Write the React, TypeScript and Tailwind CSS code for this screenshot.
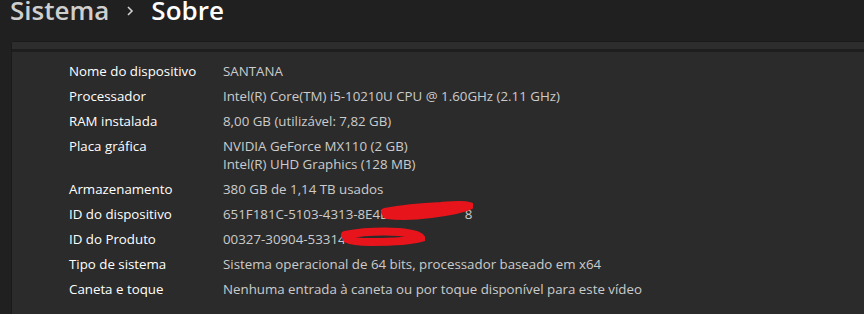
import React from "react";

const rows: { label: string; value: React.ReactNode }[] = [
  { label: "Nome do dispositivo", value: "SANTANA" },
  { label: "Processador", value: "Intel(R) Core(TM) i5-10210U CPU @ 1.60GHz (2.11 GHz)" },
  { label: "RAM instalada", value: "8,00 GB (utilizável: 7,82 GB)" },
  {
    label: "Placa gráfica",
    value: (
      <>
        <div>NVIDIA GeForce MX110 (2 GB)</div>
        <div>Intel(R) UHD Graphics (128 MB)</div>
      </>
    ),
  },
  { label: "Armazenamento", value: "380 GB de 1,14 TB usados" },
  {
    label: "ID do dispositivo",
    value: (
      <span className="relative inline-block">
        651F181C-5103-4313-8E4E-
        <span className="inline-block w-[73px]" />8
        <svg className="absolute left-[158px] top-[-5px]" width="92" height="24" viewBox="0 0 92 24">
          <path
            d="M4 12 C 20 9, 40 7, 60 6 C 72 5, 82 4, 88 6 C 80 10, 66 12, 50 14 C 36 16, 20 17, 6 15"
            stroke="#e8141c"
            strokeWidth="8"
            fill="none"
            strokeLinecap="round"
          />
        </svg>
      </span>
    ),
  },
  {
    label: "ID do Produto",
    value: (
      <span className="relative inline-block">
        00327-30904-53314-
        <svg className="absolute left-[118px] top-[-4px]" width="84" height="22" viewBox="0 0 84 22">
          <path
            d="M4 9 C 20 6, 40 5, 58 6 C 70 7, 78 9, 80 12 C 70 15, 50 16, 30 16 C 18 16, 10 15, 6 13"
            stroke="#e8141c"
            strokeWidth="8"
            fill="none"
            strokeLinecap="round"
          />
        </svg>
      </span>
    ),
  },
  { label: "Tipo de sistema", value: "Sistema operacional de 64 bits, processador baseado em x64" },
  { label: "Caneta e toque", value: "Nenhuma entrada à caneta ou por toque disponível para este vídeo" },
];

export default function App() {
  return (
    <div
      className="w-[864px] h-[314px] overflow-hidden bg-[#202020] flex flex-col"
      style={{ fontFamily: '"Segoe UI", "Open Sans", "Noto Sans", sans-serif' }}
    >
      <div className="h-[41px] flex items-start pl-[10px]">
        <div className="flex items-center gap-[16px] text-[26px] font-semibold leading-[20px]">
          <span className="text-[#cfcfcf]">Sistema</span>
          <svg width="10" height="12" viewBox="0 0 10 12" className="mt-[2px]">
            <path d="M3 2 L7 6 L3 10" stroke="#d0d0d0" strokeWidth="1.6" fill="none" />
          </svg>
          <span className="text-white">Sobre</span>
        </div>
      </div>
      <div className="ml-[11px] flex-1 flex flex-col rounded-tl-[4px] border-l border-t border-[#1a1a1a] bg-[#2b2b2b]">
        <div className="h-[10px] bg-[#2d2d2d] border-b-[3px] border-[#1e1e1e]" />
        <div className="flex flex-col gap-[7px] pt-[10px] pl-[57px] text-[13.3px] leading-[18px]">
          {rows.map((r) => (
            <div key={r.label} className="flex">
              <div className="w-[154px] shrink-0 text-white">{r.label}</div>
              <div className="text-[#cbcbcb]">{r.value}</div>
            </div>
          ))}
        </div>
      </div>
    </div>
  );
}
